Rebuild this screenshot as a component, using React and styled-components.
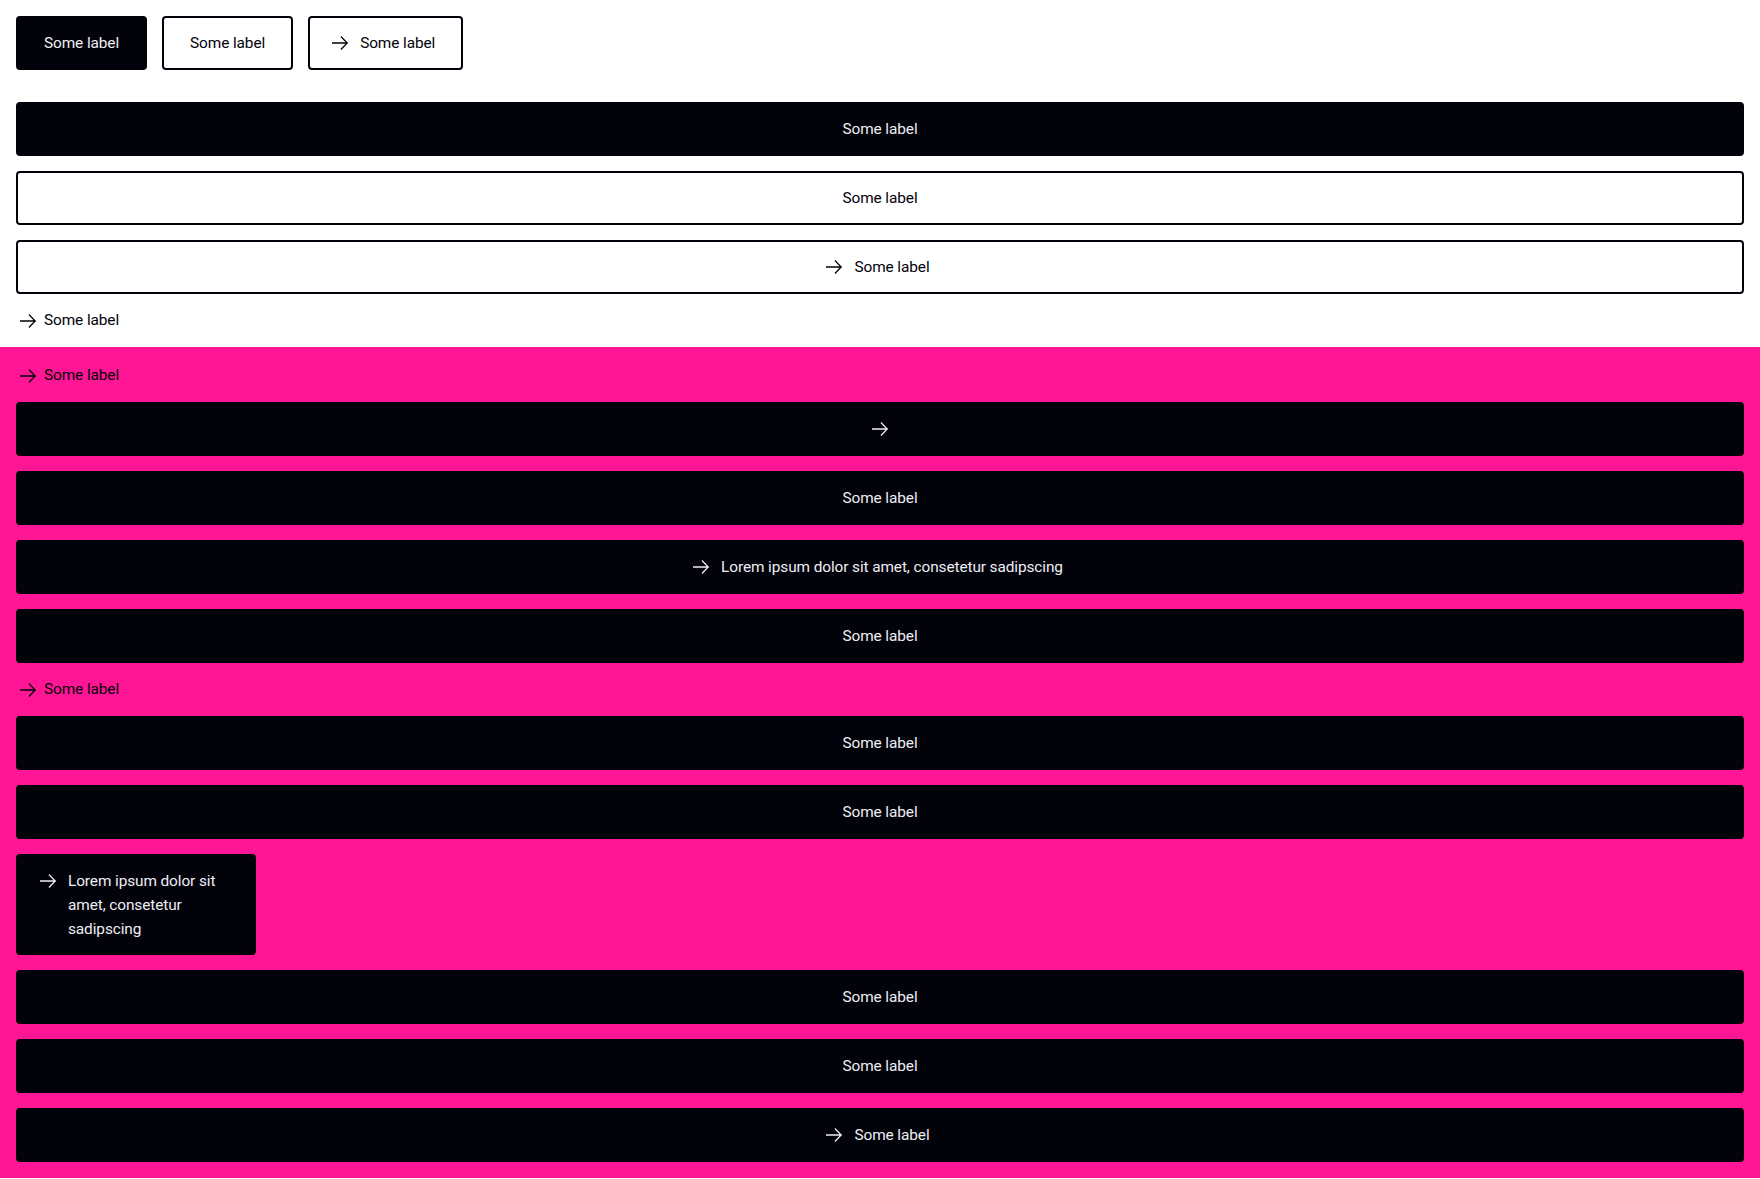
import React from "react";
import styled, { createGlobalStyle, css } from "styled-components";

const INK = "#02020a";
const PINK = "#ff1694";
const LIGHT = "#eeeef3";

const Global = createGlobalStyle`
  html, body { margin: 0; padding: 0; background: #ffffff; }
  body { font-family: Roboto, "Noto Sans", "Liberation Sans", sans-serif; color: ${INK}; }
  * { box-sizing: border-box; }
`;

const WhiteSection = styled.section`
  background: #ffffff;
  padding: 16px 16px 15px;
  display: flex;
  flex-direction: column;
`;

const PinkSection = styled.section`
  background: ${PINK};
  padding: 17px 16px 16px;
  display: flex;
  flex-direction: column;
  gap: 15px;
`;

const Row = styled.div`
  display: flex;
  gap: 15px;
  margin-bottom: 32px;
`;

const Stack = styled.div`
  display: flex;
  flex-direction: column;
  gap: 15px;
`;

const Button = styled.button`
  font-family: inherit;
  font-size: 15.4px;
  line-height: 24px;
  letter-spacing: -0.1px;
  min-height: 54px;
  padding: 0 26px;
  border-radius: 4px;
  border: 2px solid ${INK};
  display: inline-flex;
  align-items: center;
  justify-content: center;
  gap: 12px;
  cursor: pointer;
  ${(p) =>
    p.$variant === "outline"
      ? css`
          background: #ffffff;
          color: ${INK};
        `
      : css`
          background: ${INK};
          color: ${LIGHT};
        `}
  ${(p) =>
    p.$block &&
    css`
      width: 100%;
    `}
  ${(p) =>
    p.$multi &&
    css`
      width: 240px;
      padding: 13px 26px 12px;
      align-items: flex-start;
      justify-content: flex-start;
      text-align: left;
    `}
`;

const IconSlot = styled.span`
  display: inline-flex;
  align-items: center;
  height: 24px;
  flex: none;
  margin-left: ${(p) => (p.$only ? "0" : "-4px")};
`;

const Label = styled.span`
  display: block;
`;

const TextLink = styled.a`
  display: inline-flex;
  align-items: center;
  align-self: flex-start;
  gap: 8px;
  padding-left: 4px;
  font-size: 15.4px;
  line-height: 23px;
  letter-spacing: -0.1px;
  color: ${INK};
  text-decoration: none;
  cursor: pointer;
`;

const Arrow = () => (
  <svg width="16" height="14" viewBox="0 0 16 14" fill="none" aria-hidden="true">
    <path
      d="M0 7H15.2M9.4 1L15.2 7L9.4 13"
      stroke="currentColor"
      strokeWidth="1.3"
      strokeLinecap="square"
      strokeLinejoin="miter"
    />
  </svg>
);

const Btn = ({ icon, children, ...rest }) => (
  <Button {...rest}>
    {icon && (
      <IconSlot $only={!children}>
        <Arrow />
      </IconSlot>
    )}
    {children && <Label>{children}</Label>}
  </Button>
);

const Link = ({ children }) => (
  <TextLink>
    <Arrow />
    <span>{children}</span>
  </TextLink>
);

const LOREM = "Lorem ipsum dolor sit amet, consetetur sadipscing";

export default function App() {
  return (
    <>
      <Global />
      <WhiteSection>
        <Row>
          <Btn>Some label</Btn>
          <Btn $variant="outline">Some label</Btn>
          <Btn $variant="outline" icon>
            Some label
          </Btn>
        </Row>
        <Stack>
          <Btn $block>Some label</Btn>
          <Btn $block $variant="outline">
            Some label
          </Btn>
          <Btn $block $variant="outline" icon>
            Some label
          </Btn>
          <Link>Some label</Link>
        </Stack>
      </WhiteSection>
      <PinkSection>
        <Link>Some label</Link>
        <Btn $block icon />
        <Btn $block>Some label</Btn>
        <Btn $block icon>
          {LOREM}
        </Btn>
        <Btn $block>Some label</Btn>
        <Link>Some label</Link>
        <Btn $block>Some label</Btn>
        <Btn $block>Some label</Btn>
        <Btn $multi icon>
          {LOREM}
        </Btn>
        <Btn $block>Some label</Btn>
        <Btn $block>Some label</Btn>
        <Btn $block icon>
          Some label
        </Btn>
      </PinkSection>
    </>
  );
}
